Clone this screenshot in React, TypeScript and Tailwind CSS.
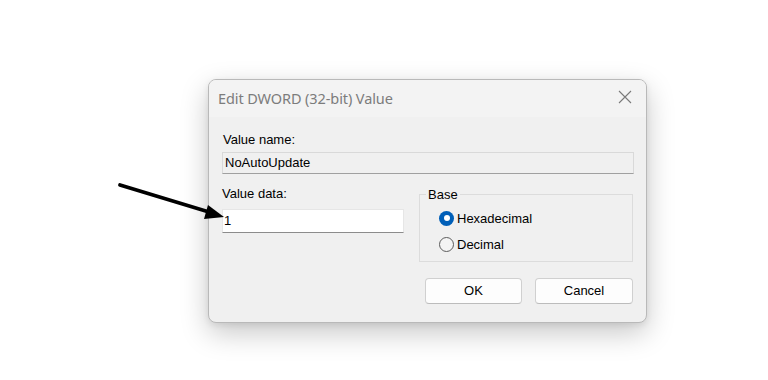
import React from "react";

function Radio({ checked, label }: { checked: boolean; label: string }) {
  return (
    <div className="flex items-center gap-[3px] h-[20px]">
      {checked ? (
        <span className="w-[15px] h-[15px] rounded-full bg-[#005fb8] flex items-center justify-center">
          <span className="w-[6px] h-[6px] rounded-full bg-white" />
        </span>
      ) : (
        <span className="w-[15px] h-[15px] rounded-full border border-[#5c5c5c] bg-[#f4f4f4]" />
      )}
      <span className="text-[13px] text-black leading-none">{label}</span>
    </div>
  );
}

export default function App() {
  return (
    <div
      className="relative w-[768px] h-[380px] bg-white overflow-hidden"
      style={{ fontFamily: '"Liberation Sans", Arial, sans-serif' }}
    >
      <div className="pt-[79px] pl-[208px]">
        <div className="w-[439px] h-[244px] rounded-[8px] border border-[#b9b9b9] bg-[#f0f0f0] shadow-[0_10px_28px_rgba(0,0,0,0.22),0_2px_6px_rgba(0,0,0,0.08)] overflow-hidden flex flex-col">
          {/* Title bar */}
          <div className="h-[37px] bg-[#f3f3f3] flex items-center justify-between pl-[9px] pr-[14px] shrink-0">
            <span
              className="text-[14.5px] text-[#7c7c7c] tracking-[-0.1px]"
              style={{ fontFamily: '"Noto Sans", "Open Sans", sans-serif' }}
            >
              Edit DWORD (32-bit) Value
            </span>
            <svg width="14" height="14" viewBox="0 0 14 14" className="mb-[3px]">
              <path d="M1 1 L13 13 M13 1 L1 13" stroke="#7a7a7a" strokeWidth="1.1" fill="none" />
            </svg>
          </div>
          {/* Body */}
          <div className="flex flex-col px-[13px] pt-[15px]">
            <div className="text-[13px] text-black leading-[15px] pl-[1px]">Value name:</div>
            <div className="mt-[5px] h-[22px] w-[412px] border border-[#d9d9d9] border-b-[#a0a0a0] bg-[#f0f0f0] flex items-center pl-[2px] text-[13px] text-black">
              NoAutoUpdate
            </div>
            <div className="flex mt-[12px]">
              <div className="flex flex-col w-[182px]">
                <div className="text-[13px] text-black leading-[15px]">Value data:</div>
                <div className="mt-[8px] h-[24px] w-[182px] bg-white border border-[#e6e6e6] border-b-[#8c8c8c] flex items-center pl-[1px] text-[13px] text-black">
                  1
                </div>
              </div>
              <fieldset className="ml-[15px] w-[215px] h-[75px] border border-[#dcdcdc] mt-[1px] p-0">
                <legend className="ml-[6px] px-[2px] text-[13px] text-black leading-[15px]">Base</legend>
                <div className="flex flex-col gap-[6px] pl-[19px] pt-[6px]">
                  <Radio checked label="Hexadecimal" />
                  <Radio checked={false} label="Decimal" />
                </div>
              </fieldset>
            </div>
            <div className="flex justify-end gap-[13px] mt-[16px]">
              <button className="w-[97px] h-[26px] rounded-[4px] bg-[#fdfdfd] border border-[#d0d0d0] border-b-[#bcbcbc] text-[13px] text-black">
                OK
              </button>
              <button className="w-[98px] h-[26px] rounded-[4px] bg-[#fdfdfd] border border-[#d0d0d0] border-b-[#bcbcbc] text-[13px] text-black">
                Cancel
              </button>
            </div>
          </div>
        </div>
      </div>
      {/* Annotation arrow */}
      <svg className="absolute left-0 top-0 pointer-events-none" width="768" height="380">
        <line x1="120" y1="185" x2="209" y2="212" stroke="#000" strokeWidth="3.8" strokeLinecap="round" />
        <polygon points="224,217 204,219 208,205" fill="#000" />
      </svg>
    </div>
  );
}
